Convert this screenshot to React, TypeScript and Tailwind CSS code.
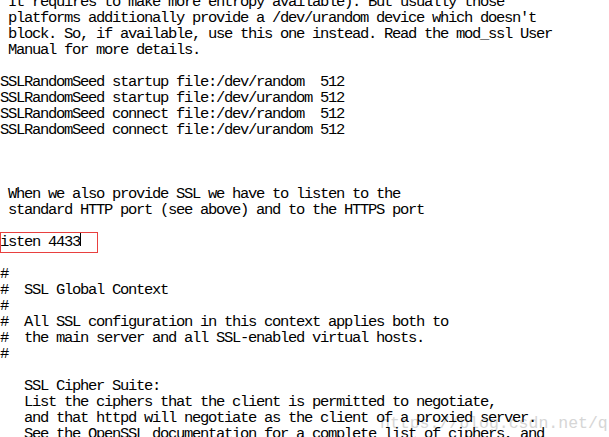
import React from "react";

const lines: string[] = [
  " It requires to make more entropy available). But usually those",
  " platforms additionally provide a /dev/urandom device which doesn't",
  " block. So, if available, use this one instead. Read the mod_ssl User",
  " Manual for more details.",
  "",
  "SSLRandomSeed startup file:/dev/random  512",
  "SSLRandomSeed startup file:/dev/urandom 512",
  "SSLRandomSeed connect file:/dev/random  512",
  "SSLRandomSeed connect file:/dev/urandom 512",
  "",
  "",
  "",
  " When we also provide SSL we have to listen to the",
  " standard HTTP port (see above) and to the HTTPS port",
  "",
  "@@LISTEN@@",
  "",
  "#",
  "#  SSL Global Context",
  "#",
  "#  All SSL configuration in this context applies both to",
  "#  the main server and all SSL-enabled virtual hosts.",
  "#",
  "",
  "   SSL Cipher Suite:",
  "   List the ciphers that the client is permitted to negotiate,",
  "   and that httpd will negotiate as the client of a proxied server.",
  "   See the OpenSSL documentation for a complete list of ciphers, and",
];

export default function App() {
  return (
    <div className="relative w-[609px] h-[437px] overflow-hidden bg-white">
      <div className="absolute left-[380px] top-[414px] whitespace-pre text-[16.5px] leading-[20px] text-[#d6d6d6] [font-family:'Liberation_Mono',monospace]">
        https://blog.csdn.net/q
      </div>
      <div className="relative mt-[-6px] text-black text-[15.5px] leading-4 tracking-[-1.3px] [font-family:'Liberation_Mono',monospace]">
        {lines.map((l, i) =>
          l === "@@LISTEN@@" ? (
            <div key={i} className="relative h-4 whitespace-pre">
              <span>isten 4433</span>
              <span className="absolute left-[80px] top-[-1px] w-px h-[13px] bg-black" />
              <span className="absolute left-0 top-[-2px] w-[98px] h-[21px] border border-[#e8403f]" />
            </div>
          ) : (
            <div key={i} className="h-4 whitespace-pre">
              {l}
            </div>
          )
        )}
      </div>
    </div>
  );
}
